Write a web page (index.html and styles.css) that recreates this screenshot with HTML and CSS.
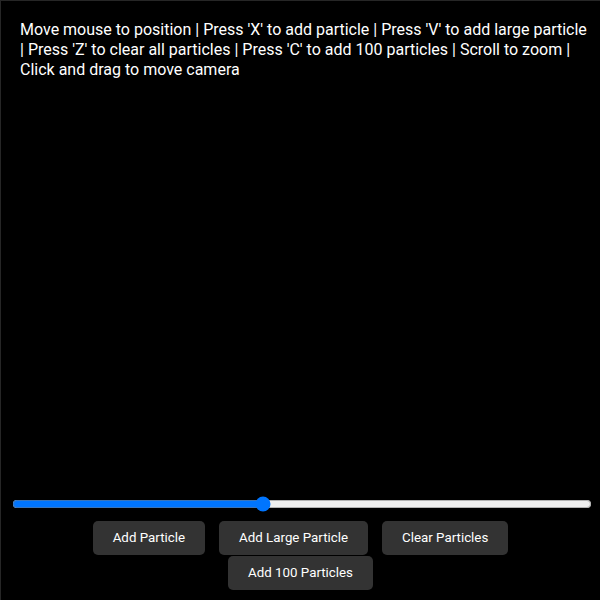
FILE: index.html
```html
<!DOCTYPE html>
<html>
<head>
<meta charset="utf-8">
<link rel="stylesheet" href="styles.css">
</head>
<body>
<div class="frame">
  <div class="info">Move mouse to position | Press 'X' to add particle | Press 'V' to add large particle | Press 'Z' to clear all particles | Press 'C' to add 100 particles | Scroll to zoom | Click and drag to move camera</div>
  <div class="controls">
    <input class="slider" type="range" min="0" max="1000" value="431">
    <div class="buttons">
      <button class="btn">Add Particle</button>
      <button class="btn">Add Large Particle</button>
      <button class="btn">Clear Particles</button>
      <button class="btn">Add 100 Particles</button>
    </div>
  </div>
</div>
</body>
</html>
```
FILE: styles.css
```css
html, body {
  margin: 0;
  padding: 0;
  background: #000;
}
.frame {
  box-sizing: border-box;
  width: 600px;
  height: 600px;
  border-top: 1px solid #262626;
  border-left: 1px solid #262626;
  display: flex;
  flex-direction: column;
  justify-content: space-between;
  font-family: Roboto, "Liberation Sans", sans-serif;
  color: #fff;
}
.info {
  padding: 19px 10px 0 19px;
  font-size: 16px;
  line-height: 20px;
}
.controls {
  display: flex;
  flex-direction: column;
  align-items: center;
  padding-bottom: 10px;
}
.slider {
  width: 580px;
  margin: 0 0 9px 0;
  align-self: flex-start;
  margin-left: 11px;
}
.buttons {
  display: flex;
  flex-wrap: wrap;
  justify-content: center;
  column-gap: 14px;
  row-gap: 1px;
  width: 440px;
}
.btn {
  font-family: Roboto, "Liberation Sans", sans-serif;
  font-size: 13.333px;
  line-height: 16px;
  color: #fff;
  background: #333;
  border: none;
  border-radius: 5px;
  padding: 9px 20px;
}
```
